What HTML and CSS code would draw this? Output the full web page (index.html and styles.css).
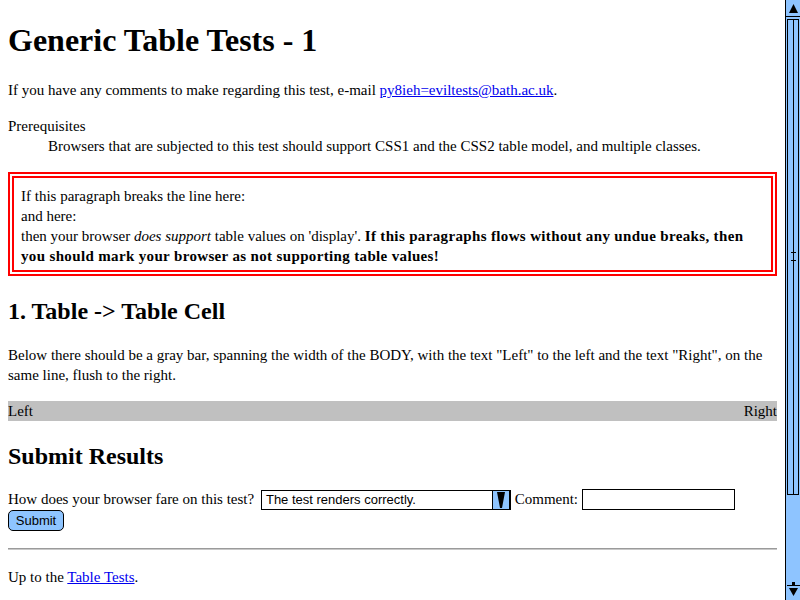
FILE: index.html
```html
<!DOCTYPE html>
<html>
<head>
<meta charset="utf-8">
<title>Generic Table Tests - 1</title>
<link rel="stylesheet" href="styles.css">
</head>
<body>
<h1 class="title">Generic Table Tests - 1</h1>
<p>If you have any comments to make regarding this test, e-mail <a href="#">py8ieh=eviltests@bath.ac.uk</a>.</p>
<dl class="prereq">
<dt>Prerequisites</dt>
<dd>Browsers that are subjected to this test should support CSS1 and the CSS2 table model, and multiple classes.</dd>
</dl>
<p class="warning">If this paragraph breaks the line here:<br>and here:<br>then your browser <em>does support</em> table values on 'display'. <strong>If this paragraphs flows without any undue breaks, then</strong> <strong>you should mark your browser as not supporting table values!</strong></p>
<h2 class="section">1. Table -&gt; Table Cell</h2>
<p>Below there should be a gray bar, spanning the width of the BODY, with the text "Left" to the left and the text "Right", on the same line, flush to the right.</p>
<div class="bar"><span>Left</span><span>Right</span></div>
<h2 class="section section-last">Submit Results</h2>
<form class="results">
<p class="form-line">How does your browser fare on this test? <span class="select"><span class="select-text">The test renders correctly.</span><span class="select-btn"><svg width="16" height="18" viewBox="0 0 16 18"><path d="M4 1 H12 L9 17 H7 Z" fill="#000"/></svg></span></span> Comment: <span class="input"></span></p>
<div class="submit-row"><span class="submit">Submit</span></div>
</form>
<hr class="rule">
<p class="footer">Up to the <a href="#">Table Tests</a>.</p>

<div class="scrollbar">
  <div class="sb-btn sb-up"><svg width="13" height="13" viewBox="0 0 13 13"><path d="M6.5 2 L11 11 H2 Z" fill="#000"/></svg></div>
  <div class="sb-thumb"><span class="grip"></span></div>
  <div class="sb-track"></div>
  <div class="sb-btn sb-down"><svg width="13" height="16" viewBox="0 0 13 16"><rect x="5" y="0" width="3" height="3" fill="#000"/><rect x="0" y="3" width="13" height="1" fill="#000"/><path d="M2 6 H11 L6.5 14 Z" fill="#000"/></svg></div>
</div>
</body>
</html>
```
FILE: styles.css
```css
html {
  background: #fff;
}
body {
  margin: 0 23px 8px 8px;
  padding-top: 1px;
  font-family: "Liberation Serif", "Times New Roman", serif;
  font-size: 15px;
  line-height: 20px;
  color: #000;
  background: #fff;
}
a {
  color: #0000ee;
}
.title {
  font-size: 32px;
  line-height: 37px;
  margin: 21px 0 21px;
}
.section {
  font-size: 24px;
  line-height: 28px;
  margin: 21px 0 20px;
}
.section-last {
  margin-bottom: 18px;
}
p {
  margin: 16px 0;
}
.prereq {
  margin: 16px 0;
}
.prereq dd {
  margin-left: 40px;
}
.warning {
  border: 6px double #f00;
  padding: 8px 7px 4px;
}
.warning strong {
  letter-spacing: 0.35px;
}
.bar {
  display: flex;
  justify-content: space-between;
  background: #c0c0c0;
  height: 20px;
}
.results {
  margin: 0 0 17px;
}
.form-line {
  margin: 0;
  height: 22px;
  line-height: 22px;
}
.select {
  display: inline-flex;
  vertical-align: middle;
  width: 250px;
  height: 20px;
  box-sizing: border-box;
  border: 1px solid #000;
  margin-left: 3px;
  background: #fff;
  font-family: "Liberation Sans", Arial, sans-serif;
  font-size: 13px;
  line-height: 18px;
  position: relative;
  top: -1px;
}
.select-text {
  flex: 1;
  padding-left: 4px;
}
.select-btn {
  width: 18px;
  box-sizing: border-box;
  border-left: 1px solid #000;
  border-right: 1px solid #000;
  background: #8ec4ff;
  display: flex;
  justify-content: center;
}
.input {
  display: inline-block;
  vertical-align: middle;
  width: 153px;
  height: 21px;
  box-sizing: border-box;
  border: 1px solid #000;
  background: #fff;
  position: relative;
  top: -1px;
}
.submit-row {
  height: 21px;
}
.submit {
  display: inline-block;
  box-sizing: border-box;
  width: 56px;
  height: 21px;
  border: 1px solid #000;
  border-radius: 5px;
  background: #8ec4ff;
  font-family: "Liberation Sans", Arial, sans-serif;
  font-size: 13px;
  line-height: 19px;
  text-align: center;
}
.rule {
  margin: 16px 0;
  border: 0;
  border-top: 1px solid #9a9a9a;
  border-bottom: 1px solid #c8c8c8;
  height: 0;
}
.footer {
  margin-top: 17px;
}
.scrollbar {
  position: fixed;
  top: 0;
  right: 0;
  width: 15px;
  height: 600px;
  box-sizing: border-box;
  border-left: 1px solid #000;
  background: #8ec4ff;
  display: flex;
  flex-direction: column;
}
.sb-btn {
  height: 16px;
  display: flex;
  justify-content: center;
  align-items: center;
}
.sb-up {
  border-bottom: 1px solid #000;
}
.sb-thumb {
  margin-top: 2px;
  height: 476px;
  box-sizing: border-box;
  border: 1px solid #000;
  margin-left: 1px;
  margin-right: 1px;
  position: relative;
  background: linear-gradient(to right, transparent 5px, #000 5px, #000 6px, transparent 6px);
}
.grip {
  position: absolute;
  left: 3px;
  top: 232px;
  width: 5px;
  height: 7px;
  border-top: 1px solid #000;
  border-bottom: 1px solid #000;
}
.sb-track {
  flex: 1;
}
.sb-down {
  height: 18px;
  align-items: flex-start;
}
```
